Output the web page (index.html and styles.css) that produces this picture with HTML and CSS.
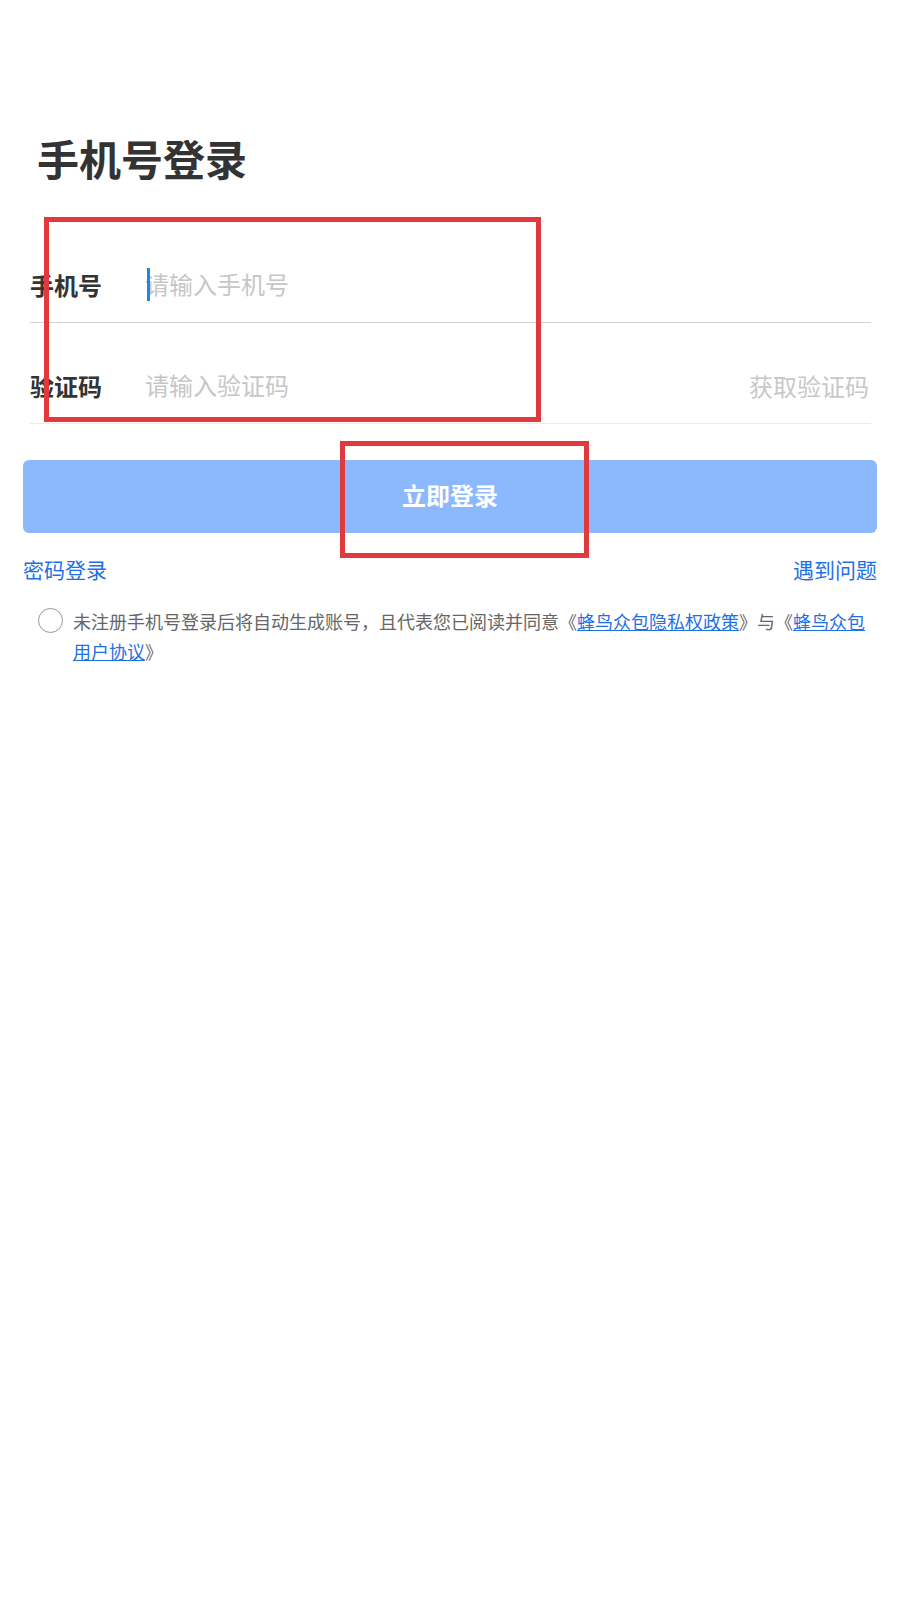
FILE: index.html
```html
<!DOCTYPE html>
<html lang="zh-CN">
<head>
    <meta charset="UTF-8">
    <meta name="viewport" content="width=device-width, initial-scale=1.0">
    <title>手机号登录</title>
    <link rel="stylesheet" href="styles.css">
</head>
<body>

<div id="login">
    <h1 class="title">手机号登录</h1>

    <div class="form">
        <div class="row row-first">
            <label class="label" for="phone">手机号</label>
            <div class="field">
                <span class="caret"></span>
                <input type="tel" id="phone" placeholder="请输入手机号">
            </div>
        </div>
        <div class="row row-second">
            <label class="label" for="code">验证码</label>
            <div class="field">
                <input type="text" id="code" placeholder="请输入验证码">
            </div>
            <span class="get-code">获取验证码</span>
        </div>
    </div>

    <button class="submit">立即登录</button>

    <div class="links">
        <a href="#">密码登录</a>
        <a href="#">遇到问题</a>
    </div>

    <div class="agree">
        <span class="radio"></span>
        <p class="agree-text">未注册手机号登录后将自动生成账号，且代表您已阅读并同意《<a href="#">蜂鸟众包隐私权政策</a>》与《<a href="#">蜂鸟众包用户协议</a>》</p>
    </div>
</div>

<div class="mark mark-form"></div>
<div class="mark mark-button"></div>

</body>
</html>
```

FILE: styles.css
```css
body {
    margin: 0;
    background: #fff;
    font-family: "Noto Sans CJK SC", "Noto Sans", sans-serif;
    color: #333;
}

#login {
    padding: 137px 23px 0 23px;
}

.title {
    margin: 0 0 43px 0;
    padding-left: 14px;
    font-size: 42px;
    line-height: 42px;
    font-weight: 700;
    color: #333;
}

.form {
    margin: 0 6px 0 7px;
}

.row {
    display: flex;
    align-items: center;
    height: 72px;
    padding: 26px 0 2px 0;
}

.row-first {
    border-bottom: 1px solid #d2d2d2;
}

.row-second {
    border-bottom: 1px solid #ececec;
}

.label {
    width: 117px;
    font-size: 24px;
    font-weight: 600;
    color: #333;
}

.field {
    position: relative;
    flex: 1;
    display: flex;
    align-items: center;
}

.field input {
    width: 100%;
    border: none;
    outline: none;
    padding: 0;
    margin-left: -2px;
    background: transparent;
    font-family: inherit;
    font-size: 24px;
    line-height: 34px;
    color: #333;
}

.field input::placeholder {
    color: #c6c6c6;
}

.caret {
    position: absolute;
    left: 0;
    top: 50%;
    width: 3px;
    height: 33px;
    margin-top: -16px;
    background: #1a8ae6;
    z-index: 1;
}

.get-code {
    padding-right: 2px;
    font-size: 24px;
    color: #c8c8c8;
}

.submit {
    display: block;
    width: 100%;
    height: 73px;
    margin-top: 36px;
    padding: 0 0 4px 0;
    border: none;
    border-radius: 6px;
    background-color: #8cb8fd;
    color: #fff;
    font-family: inherit;
    font-size: 24px;
    font-weight: 700;
}

.links {
    display: flex;
    justify-content: space-between;
    margin-top: 21px;
    font-size: 21px;
    line-height: 30px;
}

.links a {
    color: #1f6fe5;
    text-decoration: none;
}

.agree {
    display: flex;
    align-items: flex-start;
    margin-top: 22px;
    padding-left: 15px;
}

.radio {
    flex: none;
    width: 23px;
    height: 23px;
    margin: 2px 10px 0 0;
    border: 1px solid #999;
    border-radius: 50%;
}

.agree-text {
    margin: 0;
    font-size: 18px;
    line-height: 30px;
    color: #666;
}

.agree-text a {
    color: #1f6fe5;
    text-decoration: underline;
}

/* annotation frames drawn over the page */
.mark {
    position: absolute;
    border: 5px solid #e0393e;
}

.mark-form {
    left: 44px;
    top: 217px;
    width: 487px;
    height: 195px;
}

.mark-button {
    left: 340px;
    top: 441px;
    width: 239px;
    height: 107px;
}
```
